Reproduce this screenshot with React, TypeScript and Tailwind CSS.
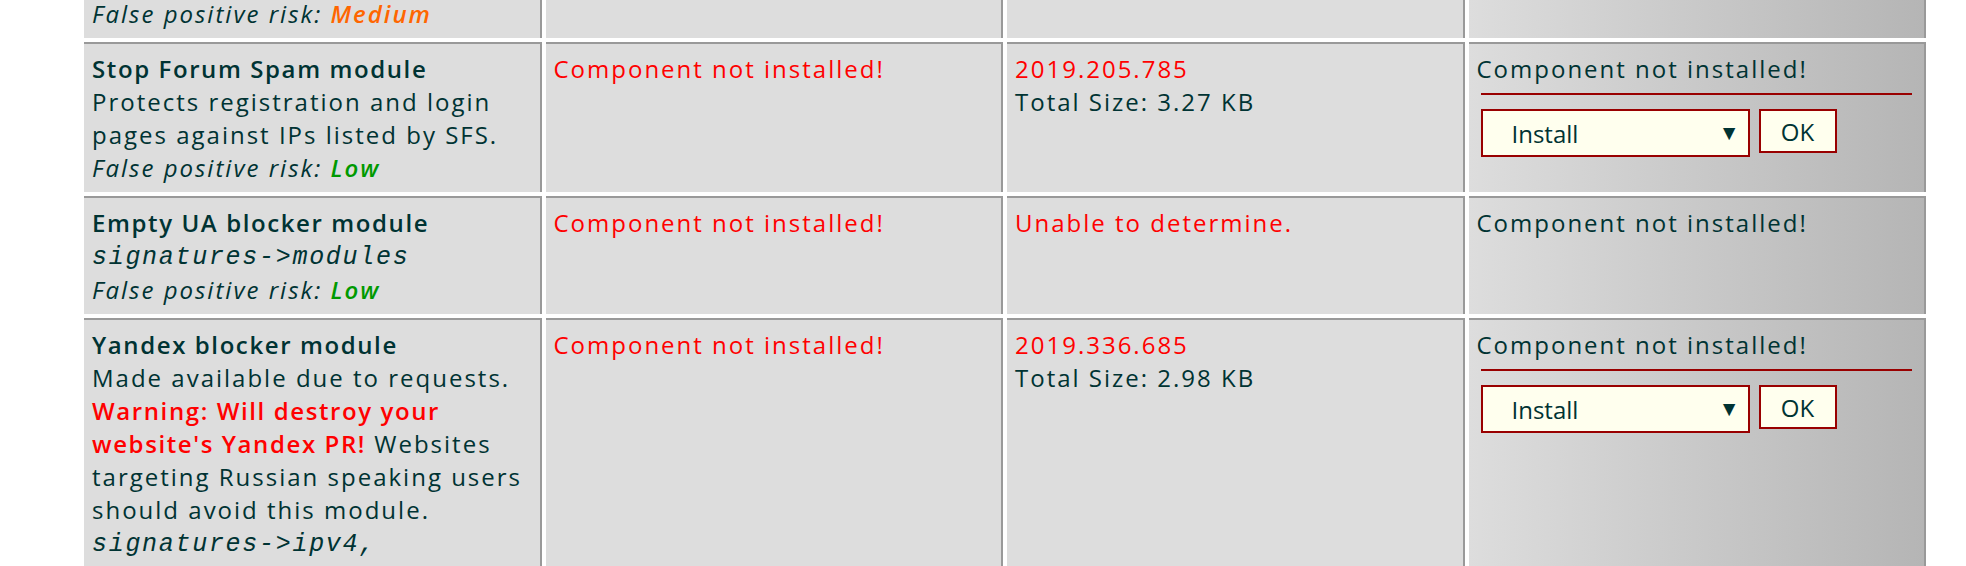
import type { ReactNode } from 'react'

const cell = 'border-t-2 border-r-2 border-[#999] bg-[#ddd] p-2'
const actionCell =
  'border-t-2 border-r-2 border-[#999] bg-gradient-to-r from-[#dddddd] to-[#b5b5b5] p-2'

function Risk({ level }: { level: 'Low' | 'Medium' }) {
  return (
    <div className="italic">
      False positive risk:{' '}
      <span className={`font-semibold ${level === 'Low' ? 'text-[#090]' : 'text-[#f60]'}`}>{level}</span>
    </div>
  )
}

function Sig({ children }: { children: ReactNode }) {
  return (
    <div className="pt-[4px] font-['Liberation_Mono',monospace] text-[25px] leading-[30px] tracking-[1.7px] italic">
      {children}
    </div>
  )
}

function InstallForm() {
  return (
    <div>
      <div>Component not installed!</div>
      <div className="mx-1 mt-2 h-[2px] bg-[#900]" />
      <div className="mx-1 mt-[14px] flex items-start gap-[9px] tracking-normal">
        <div className="relative">
          <select
            className="h-[48px] w-[269px] appearance-none border-2 border-[#900] bg-[#ffffee] pl-[29px] text-[#033] outline-none"
            defaultValue="install"
          >
            <option value="install">Install</option>
          </select>
          <span className="pointer-events-none absolute right-[10px] top-[7px] text-[21px] text-[#033]">▼</span>
        </div>
        <button
          className="h-[44px] w-[78px] border-2 border-[#900] bg-[#ffffee] text-[#033]"
          type="button"
        >
          OK
        </button>
      </div>
    </div>
  )
}

export default function App() {
  return (
    <div className="min-h-[566px] bg-white font-['Open_Sans',sans-serif] text-[24px] leading-[33px] tracking-[2px] text-[#033]">
      <div className="ml-[84px] grid w-[1842px] grid-cols-4 gap-x-1 gap-y-1">
        {/* Row above, scrolled partly out of view */}
        <div className="flex h-[38px] flex-col justify-end overflow-hidden border-r-2 border-[#999] bg-[#ddd] px-2 pb-2">
          <Risk level="Medium" />
        </div>
        <div className="h-[38px] border-r-2 border-[#999] bg-[#ddd]" />
        <div className="h-[38px] border-r-2 border-[#999] bg-[#ddd]" />
        <div className="h-[38px] border-r-2 border-[#999] bg-gradient-to-r from-[#dddddd] to-[#b5b5b5]" />

        {/* Stop Forum Spam */}
        <div className={cell}>
          <div className="font-semibold tracking-[1.6px]">Stop Forum Spam module</div>
          <div>Protects registration and login pages against IPs listed by SFS.</div>
          <Risk level="Low" />
        </div>
        <div className={cell}>
          <div className="text-[#f00]">Component not installed!</div>
        </div>
        <div className={cell}>
          <div className="text-[#f00]">2019.205.785</div>
          <div>Total Size: 3.27 KB</div>
        </div>
        <div className={actionCell}>
          <InstallForm />
        </div>

        {/* Empty UA */}
        <div className={cell}>
          <div className="font-semibold tracking-[1.6px]">Empty UA blocker module</div>
          <Sig>signatures-&gt;modules</Sig>
          <Risk level="Low" />
        </div>
        <div className={cell}>
          <div className="text-[#f00]">Component not installed!</div>
        </div>
        <div className={cell}>
          <div className="text-[#f00]">Unable to determine.</div>
        </div>
        <div className={actionCell}>
          <div>Component not installed!</div>
        </div>

        {/* Yandex */}
        <div className={cell}>
          <div className="font-semibold tracking-[1.6px]">Yandex blocker module</div>
          <div>
            Made available due to requests.{' '}
            <span className="font-semibold tracking-[1.6px] text-[#f00]">
              Warning: Will destroy your website's Yandex PR!
            </span>{' '}
            Websites targeting Russian speaking users should avoid this module.
          </div>
          <Sig>signatures-&gt;ipv4,</Sig>
          <Risk level="Low" />
        </div>
        <div className={cell}>
          <div className="text-[#f00]">Component not installed!</div>
        </div>
        <div className={cell}>
          <div className="text-[#f00]">2019.336.685</div>
          <div>Total Size: 2.98 KB</div>
        </div>
        <div className={actionCell}>
          <InstallForm />
        </div>
      </div>
    </div>
  )
}
